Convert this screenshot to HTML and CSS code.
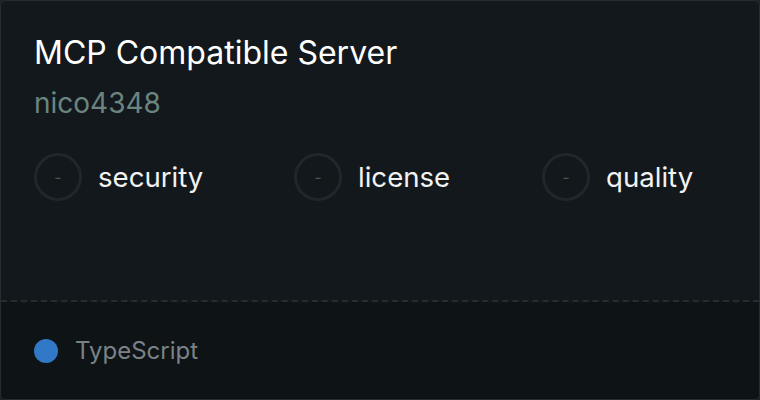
FILE: index.html
```html
<!DOCTYPE html>
<html lang="en">
<head>
    <meta charset="UTF-8">
    <meta name="viewport" content="width=device-width, initial-scale=1.0">
    <title>MCP Compatible Server</title>
    <link rel="stylesheet" href="styles.css">
</head>
<body>
    <div class="card">
        <!-- Header -->
        <div class="card-main">
            <h1 class="title">MCP Compatible Server</h1>
            <div class="author">nico4348</div>

            <!-- Scores -->
            <div class="scores">
                <div class="score score-security">
                    <span class="ring">-</span>
                    <span class="label">security</span>
                </div>
                <div class="score score-license">
                    <span class="ring">-</span>
                    <span class="label">license</span>
                </div>
                <div class="score score-quality">
                    <span class="ring">-</span>
                    <span class="label">quality</span>
                </div>
            </div>
        </div>

        <!-- Footer -->
        <div class="card-footer">
            <span class="lang-dot"></span>
            <span class="lang">TypeScript</span>
        </div>
    </div>
</body>
</html>
```

FILE: styles.css
```css
html, body {
    margin: 0;
    padding: 0;
}
body {
    width: 760px;
    height: 400px;
    background-color: #1c2226;
    font-family: Inter, "Noto Sans", sans-serif;
}
.card {
    box-sizing: border-box;
    width: 760px;
    height: 400px;
    border: 1px solid #262d31;
    border-radius: 6px;
    overflow: hidden;
    display: flex;
    flex-direction: column;
    background-color: #12181b;
}
.card-main {
    height: 301px;
    padding: 33px 33px 0;
    box-sizing: border-box;
    border-bottom: 2px dashed #262d31;
}
.title {
    margin: 0;
    font-size: 32px;
    font-weight: 400;
    line-height: 38px;
    color: #ffffff;
}
.author {
    margin-top: 14px;
    font-size: 28px;
    line-height: 34px;
    color: #6a8580;
}
.scores {
    display: flex;
    margin-top: 33px;
}
.score {
    display: flex;
    align-items: center;
    gap: 16px;
}
.score-security {
    width: 260px;
}
.score-license {
    width: 248px;
}
.ring {
    box-sizing: border-box;
    width: 48px;
    height: 48px;
    border: 3px solid #20272a;
    border-radius: 50%;
    display: flex;
    align-items: center;
    justify-content: center;
    font-size: 16px;
    color: #4a5154;
}
.label {
    font-size: 27.6px;
    color: #f2f2f2;
}
.card-footer {
    flex: 1;
    display: flex;
    align-items: center;
    gap: 17px;
    padding-left: 33px;
    background-color: #0e1316;
}
.lang-dot {
    width: 24px;
    height: 24px;
    border-radius: 50%;
    background-color: #3178c6;
}
.lang {
    font-size: 24px;
    color: #7b8287;
}
```
